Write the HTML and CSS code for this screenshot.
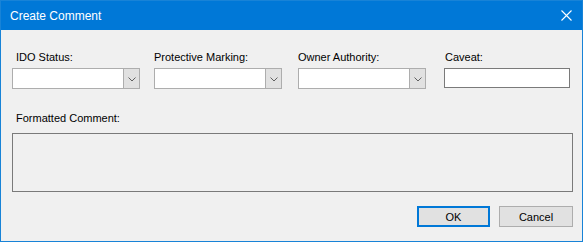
FILE: index.html
```html
<!DOCTYPE html>
<html lang="en">
<head>
  <meta charset="UTF-8" />
  <title>Create Comment</title>
  <link rel="stylesheet" href="styles.css">
</head>
<body>
  <div class="window">
    <div class="titlebar">
      <span class="title">Create Comment</span>
      <svg class="close" width="11" height="11" viewBox="0 0 11 11">
        <path d="M0.5 0.5 L10.5 10.5 M10.5 0.5 L0.5 10.5" stroke="#fff" stroke-width="1.1" fill="none" />
      </svg>
    </div>

    <div class="content">
      <div class="fields">
        <div class="field f-ido">
          <label class="lbl-ido">IDO Status:</label>
          <div class="combo">
            <div class="combo-text"></div>
            <div class="combo-btn">
              <svg width="8" height="5" viewBox="0 0 8 5"><path d="M0.5 0.5 L4 4 L7.5 0.5" stroke="#606060" fill="none" /></svg>
            </div>
          </div>
        </div>
        <div class="field f-pm">
          <label>Protective Marking:</label>
          <div class="combo">
            <div class="combo-text"></div>
            <div class="combo-btn">
              <svg width="8" height="5" viewBox="0 0 8 5"><path d="M0.5 0.5 L4 4 L7.5 0.5" stroke="#606060" fill="none" /></svg>
            </div>
          </div>
        </div>
        <div class="field f-owner">
          <label>Owner Authority:</label>
          <div class="combo">
            <div class="combo-text"></div>
            <div class="combo-btn">
              <svg width="8" height="5" viewBox="0 0 8 5"><path d="M0.5 0.5 L4 4 L7.5 0.5" stroke="#606060" fill="none" /></svg>
            </div>
          </div>
        </div>
        <div class="field f-caveat">
          <label>Caveat:</label>
          <div class="textbox"></div>
        </div>
      </div>

      <label class="lbl-comment">Formatted Comment:</label>
      <div class="comment-box"></div>

      <div class="buttons">
        <button class="btn btn-default">OK</button>
        <button class="btn">Cancel</button>
      </div>
    </div>
  </div>
</body>
</html>
```

FILE: styles.css
```css
* {
  margin: 0;
  padding: 0;
  box-sizing: border-box;
}
body {
  font-family: 'Liberation Sans', Arial, sans-serif;
  font-size: 11px;
  color: #000;
  background: #fff;
}
.window {
  width: 583px;
  height: 242px;
  border: 1px solid #1883d7;
  background: #f0f0f0;
}
.titlebar {
  height: 29px;
  background: #0078d7;
  color: #fff;
  display: flex;
  align-items: center;
  padding-left: 9px;
  padding-right: 10px;
}
.title {
  font-size: 12px;
  flex: 1;
  padding-top: 1px;
}
.close {
  display: block;
  margin-top: -1px;
}
.content {
  padding: 21px 9px 0 11px;
}
.fields {
  display: flex;
}
.field label {
  display: block;
  line-height: 13px;
  height: 13px;
  margin-bottom: 4px;
}
.field .lbl-ido {
  padding-left: 4px;
}
.f-ido,
.f-pm,
.f-owner {
  width: 128px;
}
.f-pm {
  margin-left: 14px;
}
.f-owner {
  margin-left: 16px;
}
.f-caveat {
  width: 126px;
  margin-left: 18px;
}
.f-caveat label {
  padding-left: 1px;
}
.combo {
  display: flex;
  height: 21px;
  border: 1px solid #adadad;
  background: #fff;
}
.combo-text {
  flex: 1;
}
.combo-btn {
  width: 16px;
  background: #e1e1e1;
  border-left: 1px solid #adadad;
  display: flex;
  align-items: center;
  justify-content: center;
  padding-top: 1px;
}
.combo-btn svg {
  display: block;
}
.textbox {
  height: 20px;
  border: 1px solid #7a7a7a;
  background: #fff;
}
.lbl-comment {
  display: block;
  line-height: 13px;
  margin-top: 23px;
  padding-left: 4px;
}
.comment-box {
  margin-top: 8px;
  height: 59px;
  border: 1px solid #7a7a7a;
  background: #f0f0f0;
}
.buttons {
  display: flex;
  justify-content: flex-end;
  gap: 9px;
  margin-top: 14px;
}
.btn {
  height: 21px;
  border: 1px solid #adadad;
  background: #e1e1e1;
  font-family: 'Liberation Sans', Arial, sans-serif;
  font-size: 11px;
  color: #000;
  width: 74px;
}
.btn-default {
  width: 73px;
  border: 2px solid #0078d7;
}
```
